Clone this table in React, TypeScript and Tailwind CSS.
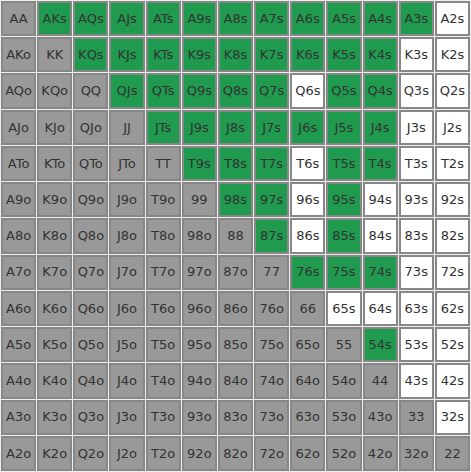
const RANKS = ["A", "K", "Q", "J", "T", "9", "8", "7", "6", "5", "4", "3", "2"];

// suited hands in the range, every other suited hand is shown white
const GREEN = new Set([
  "AKs", "AQs", "AJs", "ATs", "A9s", "A8s", "A7s", "A6s", "A5s", "A4s", "A3s",
  "KQs", "KJs", "KTs", "K9s", "K8s", "K7s", "K6s", "K5s", "K4s",
  "QJs", "QTs", "Q9s", "Q8s", "Q7s", "Q5s", "Q4s",
  "JTs", "J9s", "J8s", "J7s", "J6s", "J5s", "J4s",
  "T9s", "T8s", "T7s", "T5s", "T4s",
  "98s", "97s", "95s",
  "87s", "85s",
  "76s", "75s", "74s",
  "54s",
]);

function handName(row: number, col: number) {
  if (row === col) return RANKS[row] + RANKS[col];
  if (col > row) return RANKS[row] + RANKS[col] + "s";
  return RANKS[col] + RANKS[row] + "o";
}

function cellColor(hand: string) {
  if (GREEN.has(hand)) return "bg-[#1f9a4e]";
  if (hand.endsWith("s")) return "bg-white";
  return "bg-[#999999]";
}

export default function App() {
  return (
    <div className="h-[472px] w-[471px] bg-[#eeeeee] p-px">
      <div className="grid h-full grid-cols-13 grid-rows-13 gap-px">
        {RANKS.map((_, row) =>
          RANKS.map((_, col) => {
            const hand = handName(row, col);
            return (
              <div
                key={hand}
                className={`flex items-center justify-center border-2 border-[#878787] text-[13px] text-[#333333] ${cellColor(hand)}`}
                style={{ fontFamily: '"DejaVu Sans", Verdana, sans-serif' }}
              >
                {hand}
              </div>
            );
          })
        )}
      </div>
    </div>
  );
}
